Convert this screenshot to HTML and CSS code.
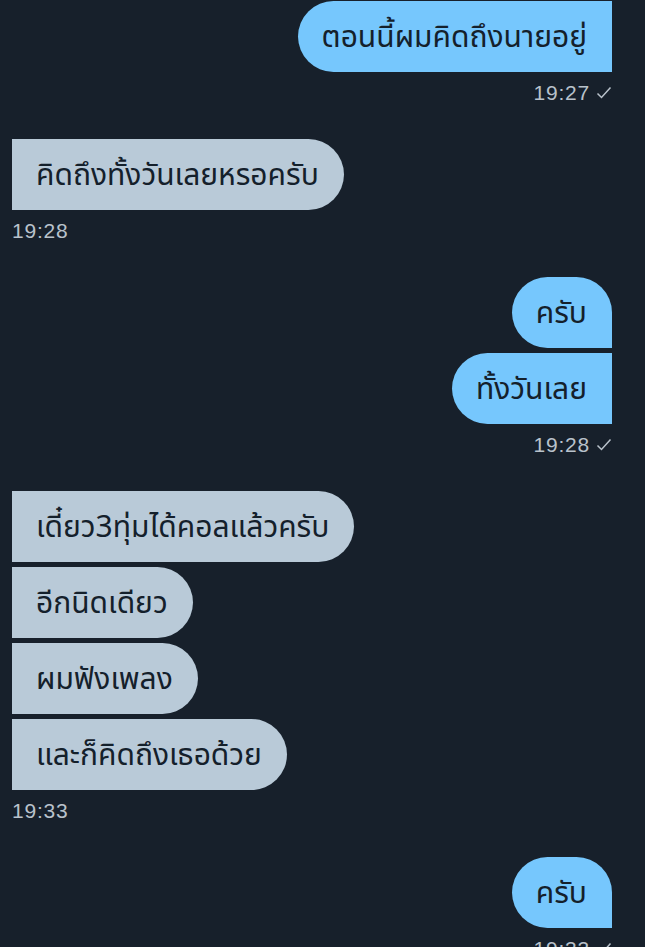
FILE: index.html
```html
<!DOCTYPE html>
<html lang="th">
<head>
  <meta charset="UTF-8" />
  <meta name="viewport" content="width=device-width, initial-scale=1.0"/>
  <title>Messages</title>
  <link rel="stylesheet" href="styles.css">
</head>
<body>

  <div class="chat">

    <div class="group sent">
      <div class="bubble cont">ตอนนี้ผมคิดถึงนายอยู่</div>
      <div class="time">19:27 <svg class="check" viewBox="0 0 16 14"><path d="M1.5 7.5 L5.5 11.5 L14.5 1.5" /></svg></div>
    </div>

    <div class="group received">
      <div class="bubble">คิดถึงทั้งวันเลยหรอครับ</div>
      <div class="time">19:28</div>
    </div>

    <div class="group sent">
      <div class="bubble">ครับ</div>
      <div class="bubble cont">ทั้งวันเลย</div>
      <div class="time">19:28 <svg class="check" viewBox="0 0 16 14"><path d="M1.5 7.5 L5.5 11.5 L14.5 1.5" /></svg></div>
    </div>

    <div class="group received">
      <div class="bubble">เดี๋ยว3ทุ่มได้คอลแล้วครับ</div>
      <div class="bubble">อีกนิดเดียว</div>
      <div class="bubble">ผมฟังเพลง</div>
      <div class="bubble">และก็คิดถึงเธอด้วย</div>
      <div class="time">19:33</div>
    </div>

    <div class="group sent">
      <div class="bubble">ครับ</div>
      <div class="time">19:33 <svg class="check" viewBox="0 0 16 14"><path d="M1.5 7.5 L5.5 11.5 L14.5 1.5" /></svg></div>
    </div>

  </div>

</body>
</html>
```

FILE: styles.css
```css
* {
  margin: 0;
  padding: 0;
  box-sizing: border-box;
}

body {
  background-color: #17202b;
  font-family: "Noto Sans Thai", "Liberation Sans", "Noto Sans", sans-serif;
  color: #14202b;
  overflow: hidden;
}

.chat {
  display: flex;
  flex-direction: column;
  gap: 35px;
  padding: 1px 33px 0 12px;
}

.group {
  display: flex;
  flex-direction: column;
  gap: 5px;
}

.group.sent {
  align-items: flex-end;
}

.group.received {
  align-items: flex-start;
}

.bubble {
  font-size: 30px;
  line-height: 39px;
  padding: 18px 25px 14px 24px;
  height: 71px;
  white-space: nowrap;
}

.sent .bubble {
  background-color: #76c7fd;
  border-radius: 36px 36px 0 36px;
}

.sent .bubble.cont {
  border-radius: 36px 0 0 36px;
}

.received .bubble {
  background-color: #b9cad8;
  border-radius: 0 36px 36px 0;
}

.time {
  margin-top: 5px;
  font-family: "Liberation Sans", Arial, sans-serif;
  font-size: 21px;
  letter-spacing: 0.8px;
  line-height: 22px;
  color: #b9c2cb;
  display: flex;
  align-items: center;
  gap: 6px;
}

.check {
  width: 16px;
  height: 14px;
  fill: none;
  stroke: #b9c2cb;
  stroke-width: 1.5;
}
```
